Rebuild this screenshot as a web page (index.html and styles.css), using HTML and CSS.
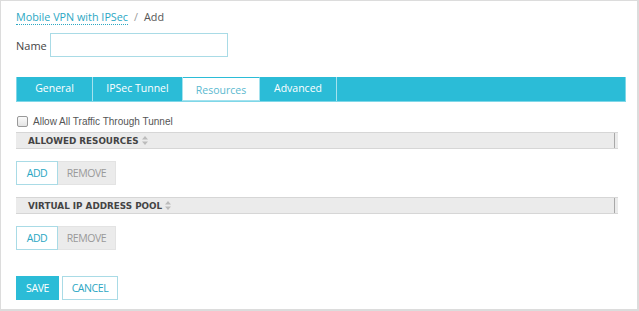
FILE: index.html
```html
<!DOCTYPE html>
<html>
<head>
<meta charset="utf-8">
<title>Mobile VPN with IPSec - Add</title>
<link rel="stylesheet" href="styles.css">
</head>
<body>
<div class="frame">
	<div class="crumbs">
		<a class="crumb-link" href="#">Mobile VPN with IPSec</a>
		<span class="crumb-sep">/</span>
		<span class="crumb-current">Add</span>
	</div>

	<div class="name-row">
		<label class="name-label">Name</label>
		<input class="name-input" type="text">
	</div>

	<ul class="tabs">
		<li class="tab tab-general">General</li>
		<li class="tab tab-ipsec">IPSec Tunnel</li>
		<li class="tab tab-res active">Resources</li>
		<li class="tab tab-adv">Advanced</li>
		<li class="tab-fill"></li>
	</ul>

	<div class="check-row">
		<span class="checkbox"></span>
		<span class="check-label">Allow All Traffic Through Tunnel</span>
	</div>

	<div class="grid-head first">
		<span class="grid-title">ALLOWED RESOURCES</span>
		<svg class="sort" width="6" height="9" viewBox="0 0 6 9"><path d="M3 0L6 3.5H0z" fill="#bbb"/><path d="M3 9L6 5.5H0z" fill="#bbb"/></svg>
		<span class="grid-end"></span>
	</div>
	<div class="btn-group">
		<button class="btn btn-add">ADD</button>
		<button class="btn btn-remove">REMOVE</button>
	</div>

	<div class="grid-head">
		<span class="grid-title">VIRTUAL IP ADDRESS POOL</span>
		<svg class="sort" width="6" height="9" viewBox="0 0 6 9"><path d="M3 0L6 3.5H0z" fill="#bbb"/><path d="M3 9L6 5.5H0z" fill="#bbb"/></svg>
		<span class="grid-end"></span>
	</div>
	<div class="btn-group">
		<button class="btn btn-add">ADD</button>
		<button class="btn btn-remove">REMOVE</button>
	</div>

	<div class="actions">
		<button class="btn btn-save">SAVE</button>
		<button class="btn btn-cancel">CANCEL</button>
	</div>
</div>
</body>
</html>
```

FILE: styles.css
```css
*{
	box-sizing: border-box;
	margin: 0;
	padding: 0;
}

body{
	background: #fff;
	font-family: "Open Sans", sans-serif;
	color: #444;
}

.frame{
	width: 639px;
	height: 311px;
	border: 1px solid #dcdcdc;
	border-right-width: 2px;
	border-bottom-width: 2px;
	padding: 0 0 0 15px;
}

/* breadcrumb */
.crumbs{
	margin-top: 8px;
	height: 16px;
	font-size: 10.8px;
	line-height: 16px;
	display: flex;
	align-items: center;
}
.crumb-link{
	color: #2ba8c4;
	text-decoration: none;
	border-bottom: 1px dotted #2ba8c4;
	line-height: 14px;
}
.crumb-sep{
	color: #999;
	margin: 0 6px;
}
.crumb-current{
	color: #555;
}

/* name */
.name-row{
	display: flex;
	align-items: center;
	margin-top: 8px;
	height: 24px;
}
.name-label{
	font-size: 11px;
	color: #444;
	width: 34px;
}
.name-input{
	width: 178px;
	height: 24px;
	border: 1px solid #a9dbe6;
	outline: none;
}

/* tabs */
.tabs{
	list-style: none;
	display: flex;
	margin-top: 20px;
	width: 610px;
	height: 25px;
	background: #2bbcd7;
	border: 1px solid #7fd7e8;
	border-top: 0;
}
.tab{
	font-size: 10.5px;
	color: #fff;
	line-height: 23px;
	text-align: center;
	border-right: 1px solid #a5e2ee;
}
.tab-general{ width: 76px; }
.tab-ipsec{ width: 90px; }
.tab-res{ width: 77px; }
.tab-adv{ width: 77px; }
.tab.active{
	background: #fff;
	color: #5bb9cf;
	border-top: 1px solid #2bbcd7;
	line-height: 24px;
	border-bottom: 1px solid #a5e2ee;
}
.tab-fill{
	flex: 1;
}

/* checkbox */
.check-row{
	display: flex;
	align-items: center;
	margin-top: 13px;
	height: 13px;
	font-family: "Liberation Sans", Arial, sans-serif;
	font-size: 10px;
	color: #555;
}
.checkbox{
	width: 11px;
	height: 11px;
	border: 1px solid #999;
	border-radius: 2px;
	background: linear-gradient(#fafafa, #e4e4e4);
	margin: 0 5px 0 1px;
}

/* grid headers */
.grid-head{
	display: flex;
	align-items: center;
	width: 602px;
	height: 17px;
	background: #ebebeb;
	border-top: 1px solid #d6d6d6;
	border-bottom: 1px solid #d6d6d6;
	padding-left: 12px;
	position: relative;
}
.grid-head.first{
	margin-top: 4px;
}
.grid-title{
	font-family: "DejaVu Sans", Verdana, sans-serif;
	font-weight: bold;
	font-size: 8.8px;
	color: #444;
}
.sort{
	margin-left: 3px;
}
.grid-end{
	position: absolute;
	right: 3px;
	top: 0;
	bottom: 0;
	width: 1px;
	background: #a8a8a8;
}

/* buttons */
.btn-group{
	display: flex;
	margin-top: 12px;
	margin-bottom: 12px;
}
.btn{
	font-family: "Open Sans", sans-serif;
	font-size: 10.5px;
	letter-spacing: -0.4px;
	height: 24px;
	background: #fff;
	cursor: pointer;
}
.btn-add{
	width: 42px;
	border: 1px solid #a9dbe6;
	color: #2aa6c3;
}
.btn-remove{
	width: 58px;
	border: 1px solid #e3e3e3;
	border-left: 0;
	background: #ebebeb;
	color: #999;
}

.actions{
	display: flex;
	margin-top: 26px;
}
.btn-save{
	width: 43px;
	border: 1px solid #2bbcd7;
	background: #2bbcd7;
	color: #fff;
	margin-right: 3px;
}
.btn-cancel{
	width: 56px;
	border: 1px solid #a9dbe6;
	color: #2aa6c3;
}
```
